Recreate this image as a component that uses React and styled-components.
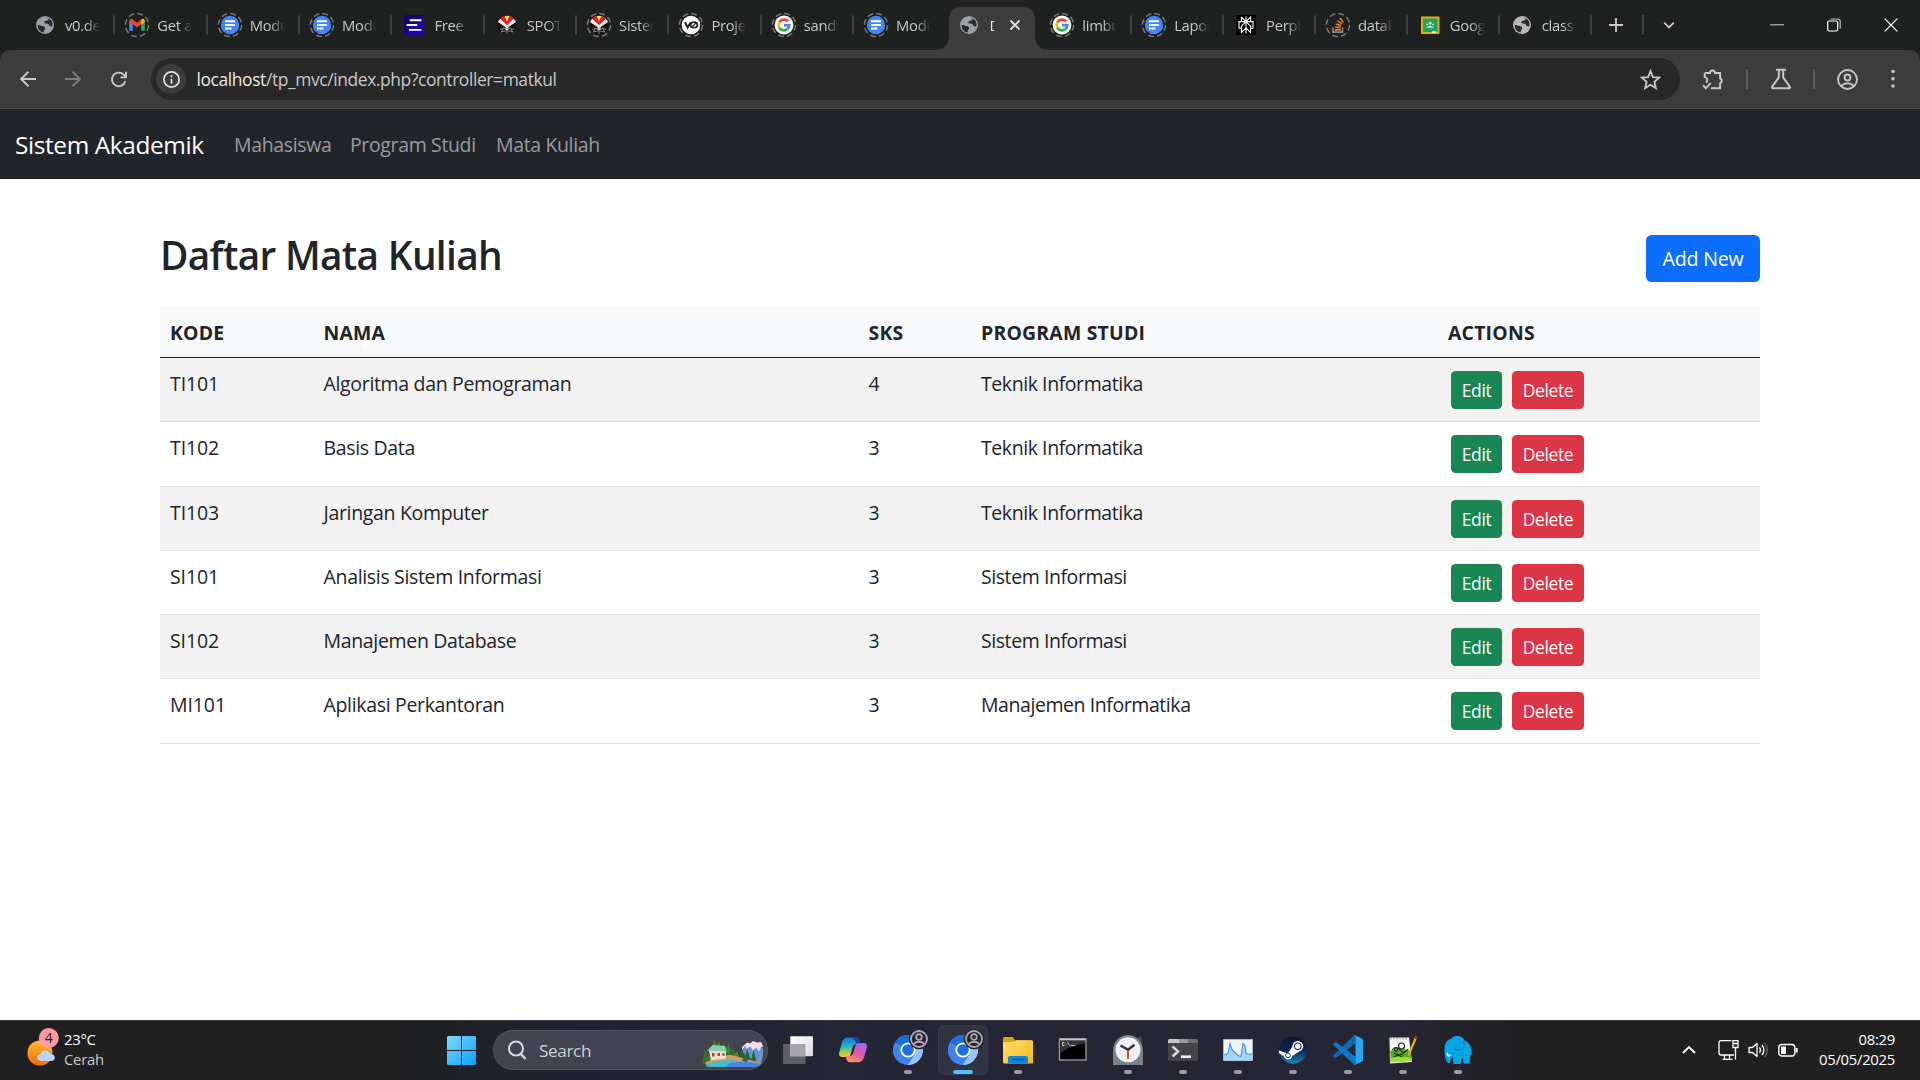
import React from "react";
import styled, { createGlobalStyle, css } from "styled-components";

const Global = createGlobalStyle`
  *, *::before, *::after { box-sizing: border-box; }
  html, body { margin: 0; height: 100%; }
  body {
    font-family: "Segoe UI", "Open Sans", "Noto Sans", sans-serif;
    background: #fff;
    color: #212529;
    overflow: hidden;
  }
`;

const Screen = styled.div`
  display: flex;
  flex-direction: column;
  width: 1920px;
  height: 1080px;
  overflow: hidden;
`;

/* ---------- browser chrome ---------- */

const TabStrip = styled.div`
  display: flex;
  align-items: center;
  height: 50px;
  flex: none;
  padding-left: 22px;
  background: #1f2020;
  color: #c7c7c7;
`;

const Tab = styled.div`
  display: flex;
  align-items: center;
  width: ${(p) => p.$w || 92.35}px;
  height: 50px;
  padding-left: 10px;
  flex: none;
  position: relative;
  ${(p) =>
    p.$divider &&
    css`
      &::after {
        content: "";
        position: absolute;
        right: -1px;
        top: 15px;
        width: 2px;
        height: 20px;
        border-radius: 1px;
        background: #3f4040;
      }
    `}
`;

const ActiveTab = styled(Tab)`
  align-self: flex-end;
  height: 43px;
  width: 85.35px;
  margin: 0 4.5px 0 4px;
  padding: 0 7px 7px 7px;
  background: #3c3c3c;
  border-radius: 12px 12px 0 0;
  &::before,
  &::after {
    content: "";
    position: absolute;
    bottom: 0;
    width: 12px;
    height: 12px;
  }
  &::before {
    right: 100%;
    background: radial-gradient(circle at 0 0, transparent 11.5px, #3c3c3c 12px);
  }
  &::after {
    left: 100%;
    background: radial-gradient(circle at 100% 0, transparent 11.5px, #3c3c3c 12px);
  }
`;

const Favicon = styled.svg`
  width: 26px;
  height: 26px;
  flex: none;
`;

const TabTitle = styled.span`
  margin-left: 7px;
  width: 35px;
  font-size: 14.8px;
  line-height: 20px;
  letter-spacing: -0.3px;
  white-space: nowrap;
  mask-image: linear-gradient(90deg, #000 60%, transparent 100%);
`;

const ActiveTitle = styled(TabTitle)`
  width: 6px;
  color: #e3e3e3;
  mask-image: linear-gradient(90deg, #000 70%, transparent 100%);
`;

const CloseTab = styled.svg`
  width: 12px;
  height: 12px;
  margin-left: auto;
  margin-right: 7px;
`;

const StripTools = styled.div`
  display: flex;
  align-items: center;
  height: 50px;
  flex: 1;
`;

const StripCell = styled.div`
  display: flex;
  align-items: center;
  justify-content: center;
  width: ${(p) => p.$w}px;
  height: 20px;
  border-right: ${(p) => (p.$line ? "2px solid #3f4040" : "none")};
`;

const WindowControls = styled.div`
  display: flex;
  margin-left: auto;
`;

const ToolbarBack = styled.div`
  background: #1f2020;
  flex: none;
`;

const Toolbar = styled.div`
  display: flex;
  align-items: center;
  height: 59px;
  background: #3c3c3c;
  border-radius: 10px 10px 0 0;
  border-bottom: 1px solid #494949;
`;

const ToolButton = styled.div`
  display: flex;
  align-items: center;
  justify-content: center;
  width: ${(p) => p.$w || 45}px;
  height: 40px;
  flex: none;
`;

const ToolNav = styled.div`
  display: flex;
  width: 151px;
  padding-left: 5.5px;
  flex: none;
`;

const Omnibox = styled.div`
  display: flex;
  align-items: center;
  width: 1529px;
  height: 42px;
  flex: none;
  padding: 0 19px 0 5px;
  border-radius: 21px;
  background: #282828;
`;

const InfoChip = styled.div`
  display: flex;
  align-items: center;
  justify-content: center;
  width: 30px;
  height: 30px;
  border-radius: 50%;
  background: #3c3c3c;
`;

const Address = styled.span`
  margin-left: 10.5px;
  flex: 1;
  font-size: 17.4px;
  letter-spacing: -0.38px;
  color: #c7c7c7;
  white-space: nowrap;
  b {
    font-weight: 400;
    color: #e8e8e8;
  }
`;

const ToolDivider = styled.div`
  width: 2px;
  height: 20px;
  background: #5c5c5c;
`;

/* ---------- page ---------- */

const Page = styled.div`
  flex: 1;
  display: flex;
  flex-direction: column;
  background: #fff;
  min-height: 0;
`;

const Navbar = styled.nav`
  display: flex;
  align-items: center;
  height: 70px;
  padding-left: 15px;
  background: #212529;
`;

const Brand = styled.a`
  width: 190px;
  margin-right: 19px;
  font-size: 24.4px;
  letter-spacing: -0.38px;
  line-height: 37px;
  white-space: nowrap;
  color: #fff;
`;

const NavLink = styled.a`
  padding: 2px 0 0 10px;
  margin-right: 10px;
  width: ${(p) => p.$w}px;
  font-size: 19.5px;
  letter-spacing: -0.36px;
  line-height: 30px;
  white-space: nowrap;
  color: rgba(255, 255, 255, 0.55);
`;

const Container = styled.main`
  width: 1600px;
  margin: 0 auto;
  padding-top: 50px;
`;

const Heading = styled.header`
  display: flex;
  justify-content: space-between;
  align-items: flex-start;
  height: 78px;
`;

const Title = styled.h1`
  margin: 2px 0 0;
  font-size: 38.8px;
  font-weight: 600;
  line-height: 48px;
  letter-spacing: -0.67px;
`;

const Button = styled.button`
  border: 0;
  padding: 0;
  font-family: inherit;
  color: #fff;
  text-align: center;
  white-space: nowrap;
  width: ${(p) => p.$w}px;
  height: 38px;
  border-radius: 4.5px;
  font-size: 17.5px;
  letter-spacing: -0.4px;
  line-height: 39px;
  background: ${(p) => p.$bg};
`;

const AddButton = styled(Button)`
  margin-top: 6px;
  height: 47px;
  line-height: 47px;
  border-radius: 5.5px;
  font-size: 19.6px;
  letter-spacing: -0.2px;
`;

const Table = styled.div`
  display: flex;
  flex-direction: column;
`;

const Row = styled.div`
  display: grid;
  grid-template-columns: 153.5px 545px 112.5px 467px 1fr;
  height: ${(p) => p.$h}px;
  padding-top: 11px;
  border-bottom: 1px solid #dee2e6;
  background: ${(p) => (p.$striped ? "#f2f2f2" : "#fff")};
`;

const HeadRow = styled(Row)`
  background: #f8f9fa;
  border-bottom-color: #212529;
  font-weight: 700;
`;

const Cell = styled.div`
  padding-left: 10px;
  font-size: 19.5px;
  line-height: 30px;
  letter-spacing: ${(p) => p.$track || -0.1}px;
  white-space: nowrap;
`;

const HeadCell = styled(Cell)`
  font-size: 19.4px;
  letter-spacing: 0.22px;
`;

const Actions = styled.div`
  display: flex;
  gap: 10px;
  padding: 2px 0 0 13px;
`;

/* ---------- taskbar ---------- */

const Taskbar = styled.footer`
  display: flex;
  align-items: stretch;
  height: 60px;
  flex: none;
  padding-bottom: 1px;
  border-top: 1px solid #3b3f42;
  background: linear-gradient(
    90deg,
    #202020 0,
    #202020 380px,
    #20232f 560px,
    #222632 760px,
    #262534 1000px,
    #262533 1400px,
    #202020 1540px
  );
  color: #fff;
`;

const Weather = styled.div`
  display: flex;
  align-items: center;
  width: 434px;
  padding-left: 26px;
  gap: 4px;
`;

const TwoLines = styled.div`
  display: flex;
  flex-direction: column;
  margin-top: -3px;
  font-size: 14.9px;
  line-height: 20px;
  letter-spacing: -0.3px;
  text-align: ${(p) => p.$align || "left"};
  span:last-child {
    color: ${(p) => p.$second || "#fff"};
  }
`;

const StartCell = styled.div`
  display: flex;
  align-items: center;
  justify-content: center;
  width: 55px;
`;

const SearchBox = styled.div`
  display: flex;
  align-items: center;
  align-self: center;
  width: 275px;
  height: 40px;
  margin: 0 2.5px 0 4px;
  padding: 0 2px 0 13px;
  border: 1px solid #535563;
  border-radius: 20px;
  background: #414350;
  overflow: hidden;
  span {
    margin-left: 12px;
    flex: 1;
    font-size: 17.2px;
    letter-spacing: -0.4px;
    color: #cfd0d4;
  }
`;

const AppSlot = styled.div`
  position: relative;
  display: flex;
  align-items: center;
  justify-content: center;
  width: 55px;
`;

const ActivePad = styled.div`
  display: flex;
  align-items: center;
  justify-content: center;
  width: 50px;
  height: 50px;
  border-radius: 6px;
  background: ${(p) => (p.$on ? "#323341" : "transparent")};
  border: 1px solid ${(p) => (p.$on ? "#3a3b49" : "transparent")};
`;

const Running = styled.i`
  position: absolute;
  bottom: 5px;
  left: 50%;
  width: ${(p) => (p.$on ? 20 : 8)}px;
  height: 4px;
  border-radius: 2px;
  transform: translateX(-50%);
  background: ${(p) => (p.$on ? "#4cc2ff" : "#9a9aa0")};
`;

const Tray = styled.div`
  display: flex;
  align-items: center;
  margin-left: auto;
  padding-right: 25px;
`;

const TrayIcon = styled.svg`
  width: ${(p) => p.$w}px;
  height: 24px;
  margin-right: ${(p) => p.$gap}px;
  flex: none;
`;

/* ---------- favicons ---------- */

const DashRing = () => (
  <circle cx="13" cy="13" r="11.6" fill="none" stroke="#777" strokeWidth="1.5" strokeDasharray="6 3.1" />
);

const Globe = ({ tone = "#9aa0a6" }) => (
  <g>
    <circle cx="13" cy="13" r="9" fill={tone} />
    <path d="M5.5 13 Q8 12.600 9.500 14 Q12 13.600 13 15.400 Q13.600 17.500 12 18 L11.500 20.600 Q6 19.600 5.500 13 Z" fill="#27292a" />
    <path d="M14 6 Q16 6 17 7 L15.500 8.500 Q12.500 8.600 12.200 10.200 Q12.600 12 15 11.500 Q17.500 11.500 17.600 14 L20.300 14.600 Q21.500 8 15.500 5.800 Z" fill="#27292a" />
  </g>
);

const Docs = () => (
  <g>
    <circle cx="13" cy="13" r="9.200" fill="#4285f4" />
    <path d="M8 9.200h10M8 12.900h10M8 16.600h6.500" stroke="#fff" strokeWidth="2" />
  </g>
);

const GoogleG = () => (
  <g>
    <circle cx="13" cy="13" r="9.400" fill="#fff" />
    <g fill="none" strokeWidth="2.700">
      <path d="M8.400 10.300 A5.300 5.300 0 0 1 17 9.500" stroke="#ea4335" />
      <path d="M8.400 10.300 A5.300 5.300 0 0 0 8.400 15.700" stroke="#fbbc05" />
      <path d="M8.400 15.700 A5.300 5.300 0 0 0 16.500 17" stroke="#34a853" />
      <path d="M16.500 17 A5.300 5.300 0 0 0 18.300 13.200 L13 13.200" stroke="#4285f4" />
    </g>
  </g>
);

const Emblem = () => (
  <g>
    <circle cx="13" cy="13" r="9.500" fill="#141414" />
    <path d="M4.300 9.500 Q7 3.500 13 3.500 Q19 3.500 21.700 9.500 L14.600 14.500 L13 17 L11.400 14.500 Z" fill="#e32222" />
    <path d="M4 10 Q5 7.500 6.500 7 L13 13 L19.500 7 Q21 7.500 22 10 L14.500 15 V18h-3V15z" fill="#f4f4f4" />
    <path d="M6.600 6.700 L13 12.600 L19.400 6.700 Q16.500 3.700 13 3.700 Q9.500 3.700 6.600 6.700z" fill="#e32222" />
    <path d="M10.600 3.900h4.800L13 9.500z" fill="#ffe06a" />
    <path d="M6 17.300q7-2 14 0M7 20q6-2.500 12 0M9.500 15.500L7.500 20M16.500 15.500l2 4.500M13 16v6" stroke="#9a9a9a" strokeWidth=".8" fill="none" />
  </g>
);

const favicons = {
  globe: <Globe />,
  globeLight: <Globe tone="#b6b6b6" />,
  gmail: (
    <g>
      <path d="M5.200 8.500v10.300h3.600v-7z" fill="#4285f4" />
      <path d="M20.800 8.500v10.300h-3.600v-7z" fill="#34a853" />
      <path d="M5.200 10V8.200q1.600-2.200 3.600-.8L13 10.800l4.200-3.400v4.900L13 15.600 5.200 10z" fill="#ea4335" />
      <path d="M17.200 7.400q2-1.400 3.600.8V10l-3.600 2.800z" fill="#fbbc04" />
    </g>
  ),
  docs: <Docs />,
  free: (
    <g>
      <rect x="3" y="3" width="20" height="20" rx="1.500" fill="#1f05a8" />
      <path d="M3 4.500Q3 3 4.500 3H23L3 23z" fill="#0d0550" opacity=".6" />
      <path d="M9.500 8.200h10.200M6.300 13h9.200M8.800 17.900h11" stroke="#fff" strokeWidth="1.900" strokeLinecap="round" />
    </g>
  ),
  emblem: <Emblem />,
  vo: (
    <g>
      <circle cx="13" cy="13" r="9.300" fill="#fff" />
      <path d="M7 10.200l2.600 5.200 3.200-5" stroke="#222" strokeWidth="2" fill="none" />
      <ellipse cx="16" cy="12.900" rx="3.400" ry="2.700" stroke="#222" strokeWidth="1.700" fill="none" />
      <path d="M14 14.800l4-3.800" stroke="#222" strokeWidth="1.100" />
    </g>
  ),
  google: <GoogleG />,
  perplexity: (
    <g>
      <rect x="3" y="3" width="20" height="20" fill="#000" />
      <g stroke="#fff" strokeWidth="1.100" fill="none">
        <path d="M13 4.500v17M8.400 5v4.600h9.200V5L13 9.600 8.400 5M13 9.600l-4.600 4.600v6.200L13 16M13 9.600l4.600 4.600v6.200L13 16M8.400 9.600H6v6.600h2.400M17.600 9.600H20v6.600h-2.400" />
      </g>
    </g>
  ),
  stack: (
    <g fill="none">
      <path d="M8 15.500v4.600h9.500v-4.600" stroke="#8a8a8a" strokeWidth="1.600" />
      <path d="M10 17.900h5.800M10.100 15l5.700.6M10.700 12l5.400 1.600M12.300 8.900l4.800 3M14.900 6l3.400 4.500" stroke="#e8781e" strokeWidth="1.700" />
    </g>
  ),
  classroom: (
    <g>
      <rect x="4" y="4.500" width="18.500" height="17.500" rx="1" fill="#e8ab0c" />
      <rect x="6" y="6.500" width="14.500" height="13.500" fill="#1ea362" />
      <circle cx="13.200" cy="11.300" r="1.400" fill="#fff" />
      <circle cx="10.200" cy="12.400" r=".9" fill="#c4ead6" />
      <circle cx="16.200" cy="12.400" r=".9" fill="#c4ead6" />
      <path d="M9 15.400q4.200-3 8.400 0z" fill="#fff" />
      <path d="M15 19.300h4v1.600h-4z" fill="#eee" />
    </g>
  ),
};

const tabsBefore = [
  ["globe", "v0.de", false],
  ["gmail", "Get a", true],
  ["docs", "Modu", true],
  ["docs", "Modu", true],
  ["free", "Free", false],
  ["emblem", "SPOT", false],
  ["emblem", "Sister", true],
  ["vo", "Proje", true],
  ["google", "sandv", true],
  ["docs", "Modu", true],
];

const tabsAfter = [
  ["google", "limbu", true],
  ["docs", "Lapor", true],
  ["perplexity", "Perpl", false],
  ["stack", "datab", true],
  ["classroom", "Goog", false],
  ["globeLight", "class", false],
];

const BrowserTab = ({ icon, title, ring, divider, width }) => (
  <Tab $divider={divider} $w={width}>
    <Favicon viewBox="0 0 26 26">
      {ring && <DashRing />}
      {favicons[icon]}
    </Favicon>
    <TabTitle>{title}</TabTitle>
  </Tab>
);

/* ---------- toolbar icons ---------- */

const Line = ({ size = 20, color = "#c7c7c7", w = 2, children }) => (
  <svg width={size} height={size} viewBox="0 0 20 20" fill="none" stroke={color} strokeWidth={w}>
    {children}
  </svg>
);

/* ---------- taskbar icons ---------- */

const Chromium = () => (
  <g>
    <circle cx="15" cy="20" r="15" fill="#4b8bf5" />
    <path d="M15 20 L2 12.5 A15 15 0 0 1 28 12.5 L15 12.5 Z" fill="#1a6de0" />
    <path d="M28 12.6 A15 15 0 0 1 14.6 35 L21.7 23.7 L22 16 L19 12.6Z" fill="#9cc2fb" />
    <path d="M2 12.5 A15 15 0 0 0 14.6 35 L21.5 24 L8.6 24 Z" fill="#3f82ee" />
    <circle cx="15" cy="20" r="7.600" fill="#fff" />
    <circle cx="15" cy="20" r="5.800" fill="#1d6fe6" />
  </g>
);

const ProfileBadge = ({ tone }) => (
  <g>
    <circle cx="26" cy="9" r="10.300" fill="#25232f" />
    <g fill="none" stroke={tone} strokeWidth="1.800">
      <circle cx="26" cy="9" r="8" />
      <circle cx="26" cy="7" r="2.800" />
      <path d="M20.500 14 Q26 9.600 31.500 14" />
    </g>
  </g>
);

const TaskIcon = styled.svg`
  width: 40px;
  height: 40px;
  flex: none;
  overflow: visible;
`;

const ChromiumApp = ({ tone }) => (
  <TaskIcon viewBox="-5 0 40 40">
    <Chromium />
    <ProfileBadge tone={tone} />
  </TaskIcon>
);

const apps = [
  {
    id: "taskview",
    icon: (
      <TaskIcon viewBox="0 0 40 40">
        <defs>
          <linearGradient id="tv" x1="0" y1="0" x2="1" y2="1">
            <stop offset="0" stopColor="#fff" />
            <stop offset="1" stopColor="#dcdcdc" />
          </linearGradient>
        </defs>
        <rect x="5" y="14" width="22.500" height="20" rx="1" fill="#5e5f61" />
        <rect x="12.300" y="6.200" width="22.700" height="20" rx="1" fill="url(#tv)" />
        <path d="M12.300 14h15.200v12.200H12.300z" fill="#a6a6a8" />
      </TaskIcon>
    ),
  },
  {
    id: "copilot",
    icon: (
      <TaskIcon viewBox="0 0 40 40">
        <defs>
          <linearGradient id="cp1" x1="0" y1="0" x2="0" y2="1">
            <stop offset="0" stopColor="#1a6fe0" />
            <stop offset=".45" stopColor="#22b3c4" />
            <stop offset=".75" stopColor="#9fd04a" />
            <stop offset="1" stopColor="#f4c62c" />
          </linearGradient>
          <linearGradient id="cp2" x1=".8" y1="0" x2=".2" y2="1">
            <stop offset="0" stopColor="#a566f2" />
            <stop offset=".5" stopColor="#e255a6" />
            <stop offset="1" stopColor="#ff9a5a" />
          </linearGradient>
        </defs>
        <path d="M23 7.500 Q25.500 7.500 26.300 10 L27.500 14 H23 Q20.700 14 20 16.500 L17.700 24 Q16.800 27 14 27 H9.500 Q5 27 6.300 22 L9 12.500 Q10.500 7.500 15 7.500Z" fill="url(#cp1)" />
        <path d="M17 32.300 Q14.500 32.300 13.700 30 L12.600 26 H16.500 Q19.300 26 20 23.500 L22.300 16.200 Q23.200 13 26 13 H30.500 Q35 13 33.700 18 L31 27.500 Q29.500 32.300 25 32.300Z" fill="url(#cp2)" />
        <path d="M19 7.500h4Q25.500 7.500 26.300 10L27.500 13.500h-4.300Q21.500 9 19 7.500z" fill="#1b3fa8" />
      </TaskIcon>
    ),
  },
  { id: "chromium1", running: true, icon: <ChromiumApp tone="#b3a5bd" /> },
  { id: "chromium2", running: true, active: true, icon: <ChromiumApp tone="#a7a9a8" /> },
  {
    id: "explorer",
    running: true,
    icon: (
      <TaskIcon viewBox="0 0 40 40">
        <defs>
          <linearGradient id="fo" x1="0" y1="0" x2="1" y2="1">
            <stop offset="0" stopColor="#ffdf70" />
            <stop offset="1" stopColor="#fbb818" />
          </linearGradient>
        </defs>
        <path d="M5 8.500Q5 7 6.500 7h8l3 3.500H33V18H5z" fill="#e0a010" />
        <path d="M5 12h10.500l3-1.700H33.500Q35 10.300 35 12v21.500H6.500Q5 33.500 5 32z" fill="url(#fo)" />
        <path d="M10 33.500V28q0-2 2-2h16q2 0 2 2v5.500z" fill="#1583d6" />
        <path d="M13.500 29.500h13" stroke="#0b5ca5" strokeWidth="1.400" />
      </TaskIcon>
    ),
  },
  {
    id: "cmd",
    icon: (
      <TaskIcon viewBox="0 0 40 40">
        <rect x="6.500" y="9" width="26.500" height="21" fill="#000" stroke="#9c9c9c" strokeWidth="1.300" />
        <path d="M7 8.500h25.500v2H7z" fill="#c9c9c9" />
        <path d="M7.500 11h24.500v3q-14 .5-24.500 9z" fill="#333" />
        <path d="M11.500 12.500h-2v3h2M13 13v.6M13 14.800v.6M14.500 12.200l2 3.400M17.500 15.600h5" stroke="#ddd" strokeWidth=".9" fill="none" />
      </TaskIcon>
    ),
  },
  {
    id: "clock",
    running: true,
    icon: (
      <TaskIcon viewBox="0 0 40 40">
        <path d="M29 9l3-3 3 4-2 4z" fill="#4a4a48" />
        <path d="M5 20A15 15 0 0 1 35 20V35H5z" fill="#76838c" />
        <circle cx="20" cy="19.800" r="12.500" fill="#f0f1f2" />
        <path d="M12.500 15.500l7.500 4.300 6.500-5" stroke="#2f3437" strokeWidth="2.400" fill="none" strokeLinejoin="round" />
        <path d="M20 20.500V29" stroke="#e2461f" strokeWidth="2" />
      </TaskIcon>
    ),
  },
  {
    id: "terminal",
    running: true,
    icon: (
      <TaskIcon viewBox="0 0 40 40">
        <rect x="5" y="9" width="30" height="22" rx="1.500" fill="#454545" />
        <path d="M5 13V10.500Q5 9 6.500 9H16v4z" fill="#c6c6c8" />
        <path d="M16 9h9.500v4H16z" fill="#98989c" />
        <path d="M25.500 9h8Q35 9 35 10.500V13h-9.500z" fill="#6e6e73" />
        <path d="M9.500 16.500l5.500 5-5.500 5" stroke="#d4d4d4" strokeWidth="2.600" fill="none" />
        <path d="M18 26.700h10" stroke="#f0f0f0" strokeWidth="2.600" />
      </TaskIcon>
    ),
  },
  {
    id: "monitor",
    running: true,
    icon: (
      <TaskIcon viewBox="0 0 40 40">
        <rect x="5.500" y="9.500" width="29" height="21" fill="#eef1f4" stroke="#a9b7c6" />
        <path d="M6 25l4-1.500 2-10 2 6 3 3 3 3 3 1 2-13 2 2 1 8 4 1 2-1v7H6z" fill="#a4d4f8" />
        <path d="M6 25l4-1.500 2-10 2 6 3 3 3 3 3 1 2-13 2 2 1 8 4 1 2-1" fill="none" stroke="#3a9ae0" strokeWidth="1.100" />
      </TaskIcon>
    ),
  },
  {
    id: "steam",
    running: true,
    icon: (
      <TaskIcon viewBox="0 0 40 40">
        <defs>
          <linearGradient id="st" x1="0" y1="0" x2="0" y2="1">
            <stop offset="0" stopColor="#0f1433" />
            <stop offset=".5" stopColor="#0b2558" />
            <stop offset="1" stopColor="#1387b8" />
          </linearGradient>
        </defs>
        <circle cx="20" cy="20" r="13.800" fill="url(#st)" />
        <path d="M5.700 20.500l9 3 5-7 8 4-8.500 5.500q-1 4-5 3.500-2.500-.5-3.300-3.300L6.300 23.500z" fill="#fff" />
        <circle cx="24.800" cy="16.300" r="5.400" fill="#fff" />
        <circle cx="24.800" cy="16.300" r="3.800" fill="#16264f" />
        <circle cx="24.800" cy="16.300" r="2.700" fill="#fff" />
        <circle cx="15" cy="25.300" r="2.400" fill="none" stroke="#15467a" strokeWidth="1" />
      </TaskIcon>
    ),
  },
  {
    id: "vscode",
    running: true,
    icon: (
      <TaskIcon viewBox="0 0 40 40">
        <path d="M5.300 25.200L26.500 5l1.500 8-19.800 14.700Q7.500 28.200 6.800 27.600L5.300 26.300Q4.800 25.800 5.300 25.200z" fill="#0f6ab4" />
        <path d="M5.300 14.800L26.500 35l1.500-8L8.200 12.300Q7.500 11.800 6.800 12.400L5.300 13.700Q4.800 14.200 5.300 14.800z" fill="#1479c4" />
        <path d="M27 5.200L34 8.500Q35 9 35 10V30Q35 31 34 31.500L27 34.800Q26 35.200 25.500 34.500 27.500 35 27.500 33V7Q27.500 5 25.500 5.500 26 4.800 27 5.200z" fill="#2aa5f4" />
      </TaskIcon>
    ),
  },
  {
    id: "notepadpp",
    running: true,
    icon: (
      <TaskIcon viewBox="0 0 40 40">
        <path d="M6.500 7.500h19.500l3 24.500L7 33.500z" fill="#f4f4f0" />
        <path d="M7.300 21q10-5 20.300 0l1.200 9.800L7.800 32.300z" fill="#4fae1e" />
        <path d="M7.700 28q10-3 20.800 0l.3 3-21 1.300z" fill="#a5db35" />
        <g stroke="#232b1c" fill="none" strokeWidth="1.200">
          <path d="M9 20q4-5 8 0t8-1M11 23q6 4 11-1M11 27q4-3 8 0" />
          <circle cx="18.500" cy="16" r="3" />
          <circle cx="13" cy="19.500" r="1.600" />
        </g>
        <path d="M8 7v2.500M11 7v2.500M14 7v2.500M17 7v2.500M20 7v2.500M23 7v2.500" stroke="#888" />
        <path d="M31.500 8l2 1.200L27 24.500l-2 1.500.2-2.600z" fill="#f0ac1a" />
        <path d="M31.500 8l1-2.200 1.700 1L33.500 9.200z" fill="#b33" />
      </TaskIcon>
    ),
  },
  {
    id: "elephant",
    running: true,
    icon: (
      <TaskIcon viewBox="0 0 40 40">
        <path d="M6.500 18Q7 10.500 13 8.800Q16 5 21 6Q25.500 7 26.500 10.500Q33 13 33.500 21Q34 25 32 25.500L31.500 33.500H25.500L25 28.500H23.500L23 34H15.500L15 27Q12.500 28 12.500 31.500Q12 33.500 10 33Q6 29 6.500 18Z" fill="#06a6e6" />
        <path d="M25.500 11q2.500 8-4 9-4 .5-5-2.500" fill="none" stroke="#0681bb" strokeWidth="1.200" />
        <path d="M9 21.500q1 4 4 3.500-1 2-3 1.500-2-1-1-5z" fill="#fff" />
      </TaskIcon>
    ),
  },
];

const ArtSvg = styled.svg`
  width: 64px;
  height: 30px;
  margin-top: 5px;
  margin-right: -1px;
  flex: none;
`;

const SearchArt = () => (
  <ArtSvg viewBox="0 0 64 30">
    <path d="M38 26L41 11l5-6h12l3 6q1 8-3 16z" fill="#6b93d6" />
    <path d="M40 9l5-4.500 3 1L51 3l4 1.500 4-.5 2.500 5-2-.5-2.500 5-3-4-3 3-3-4-3.500 2.500L43 8l-3 4z" fill="#efdfe9" />
    <path d="M7 22L8.500 9l2 1 1.500-9 2.500 7L17 3l2 6 3-4 2 6 2.500-6 2 8 2.500-3 2 6 2-3 2 5v4L20 20z" fill="#4a7f26" />
    <path d="M20 18l3-12 3 12zM27 18l2.500-11L32 18z" fill="#2f6b26" />
    <path d="M0 25L3.500 12l2 7 1.500-4 2 8-3 4z" fill="#3b7426" />
    <path d="M38 20l2.500-8 2.500 7 2-8 3 9 1 2 2.500-10 3 12z" fill="#246134" />
    <path d="M3 25Q22 14 34 18T60 25l-4 2H6z" fill="#d39b65" />
    <path d="M7 12.500h17v8L9 22.500z" fill="#f0e0c8" />
    <path d="M5 13l5.500-6L23 8l2 5.500-12-.5z" fill="#86cfaf" />
    <path d="M10 15h2.500v3.500H10zM15.500 15H18v3h-2.500zM20.500 15h2v3h-2z" fill="#8d5230" />
    <path d="M40 23l3-8 3 9z" fill="#2b6a34" />
    <path d="M3 27Q20 20.500 34 22.500T59 26Q57 29 50 29H8Q5 29 3 27z" fill="#43bccb" />
    <path d="M28 25q16-3 31 1-2 3-9 3H24z" fill="#4684e8" />
  </ArtSvg>
);

/* ---------- data ---------- */

const courses = [
  ["TI101", "Algoritma dan Pemograman", 4, "Teknik Informatika", 64],
  ["TI102", "Basis Data", 3, "Teknik Informatika", 65],
  ["TI103", "Jaringan Komputer", 3, "Teknik Informatika", 64],
  ["SI101", "Analisis Sistem Informasi", 3, "Sistem Informasi", 64],
  ["SI102", "Manajemen Database", 3, "Sistem Informasi", 64],
  ["MI101", "Aplikasi Perkantoran", 3, "Manajemen Informatika", 65],
];

export default function App() {
  return (
    <Screen>
      <Global />
      <TabStrip>
        {tabsBefore.map(([icon, title, ring], i) => (
          <BrowserTab key={i} icon={icon} title={title} ring={ring} divider={i < 9} />
        ))}
        <ActiveTab>
          <Favicon viewBox="0 0 26 26">
            <Globe />
          </Favicon>
          <ActiveTitle>D</ActiveTitle>
          <CloseTab viewBox="0 0 12 12">
            <path d="M1.500 1.500l9 9M10.500 1.500l-9 9" stroke="#e3e3e3" strokeWidth="1.900" />
          </CloseTab>
        </ActiveTab>
        {tabsAfter.map(([icon, title, ring], i) => (
          <BrowserTab key={i} icon={icon} title={title} ring={ring} width={91.9} divider />
        ))}
        <StripTools>
          <StripCell $w={53} $line>
            <Line size={14} w={2.600}>
              <path d="M10 0v20M0 10h20" />
            </Line>
          </StripCell>
          <StripCell $w={50}>
            <Line size={12} w={3}>
              <path d="M2 6l8 8 8-8" />
            </Line>
          </StripCell>
          <WindowControls>
            <StripCell $w={56}>
              <svg width="14" height="2">
                <path d="M0 0h14v1.500H0z" fill="#9a9a9a" />
              </svg>
            </StripCell>
            <StripCell $w={57}>
              <svg width="14" height="14" viewBox="0 0 14 14" fill="none" stroke="#fff" strokeWidth="1.200">
                <rect x=".7" y="3" width="10" height="10" rx="1.500" />
                <path d="M3.500 1h7.500q2.200 0 2.200 2.200V10.500" stroke="#bbb" />
              </svg>
            </StripCell>
            <StripCell $w={58}>
              <svg width="14" height="14" viewBox="0 0 14 14">
                <path d="M.7.7l12.600 12.600M13.300.7L.7 13.300" stroke="#fff" strokeWidth="1.200" />
              </svg>
            </StripCell>
          </WindowControls>
        </StripTools>
      </TabStrip>

      <ToolbarBack>
        <Toolbar>
          <ToolNav>
            <ToolButton $w={44}>
              <Line size={16} w={2.400}>
                <path d="M20 10H2M10.500 1L1.500 10l9 9" />
              </Line>
            </ToolButton>
            <ToolButton $w={46}>
              <Line size={16} w={2.400} color="#7d7d7d">
                <path d="M0 10h18M9.500 1l9 9-9 9" />
              </Line>
            </ToolButton>
            <ToolButton $w={45}>
              <Line size={17} w={2.300}>
                <path d="M18 12a8 8 0 1 1-2-7.700L18.500 7M18.800 1v6.500h-6.500" />
              </Line>
            </ToolButton>
          </ToolNav>
          <Omnibox>
            <InfoChip>
              <Line size={17} color="#e3e3e3">
                <circle cx="10" cy="10" r="9" />
                <path d="M10 9v6M10 5v2.300" />
              </Line>
            </InfoChip>
            <Address>
              <b>localhost</b>/tp_mvc/index.php?controller=matkul
            </Address>
            <Line size={21} w={1.800}>
              <path d="M10 2l2.300 5.700 6 .5-4.600 4 1.400 6L10 15l-5.100 3.200 1.400-6-4.600-4 6-.5z" />
            </Line>
          </Omnibox>
          <ToolButton $w={66}>
            <Line size={22} w={1.800}>
              <path d="M2.500 4.500h4.700a2.300 2.300 0 0 1 4.600 0h4.700v5a2.300 2.300 0 0 1 0 4.300v4.700H8M2.500 4.500v3.800a2.700 2.700 0 0 1 1 5M1 15.500l2.500 3L8 13.500" />
            </Line>
          </ToolButton>
          <ToolDivider />
          <ToolButton $w={65}>
            <Line size={22} w={1.800}>
              <path d="M5.500 1.500h9M8 2v6.500L2 17q-.5 1.500 1 1.500h14q1.500 0 1-1.500l-6-8.500V2" />
            </Line>
          </ToolButton>
          <ToolDivider />
          <ToolButton $w={65}>
            <Line size={21} w={1.800}>
              <circle cx="10" cy="10" r="9" />
              <circle cx="10" cy="8" r="2.800" />
              <path d="M4 16q6-5 12 0" />
            </Line>
          </ToolButton>
          <ToolButton $w={25}>
            <svg width="4" height="20" viewBox="0 0 4 20" fill="#c7c7c7">
              <circle cx="2" cy="2.500" r="1.800" />
              <circle cx="2" cy="9.800" r="1.800" />
              <circle cx="2" cy="17" r="1.800" />
            </svg>
          </ToolButton>
        </Toolbar>
      </ToolbarBack>

      <Page>
        <Navbar>
          <Brand>Sistem Akademik</Brand>
          <NavLink $w={106}>Mahasiswa</NavLink>
          <NavLink $w={136}>Program Studi</NavLink>
          <NavLink $w={120}>Mata Kuliah</NavLink>
        </Navbar>
        <Container>
          <Heading>
            <Title>Daftar Mata Kuliah</Title>
            <AddButton $w={114} $bg="#0d6efd">
              Add New
            </AddButton>
          </Heading>
          <Table>
            <HeadRow $h={51}>
              <HeadCell>KODE</HeadCell>
              <HeadCell>NAMA</HeadCell>
              <HeadCell>SKS</HeadCell>
              <HeadCell>PROGRAM STUDI</HeadCell>
              <HeadCell>ACTIONS</HeadCell>
            </HeadRow>
            {courses.map(([kode, nama, sks, prodi, h], i) => (
              <Row key={kode} $h={h} $striped={i % 2 === 0}>
                <Cell>{kode}</Cell>
                <Cell $track={-0.33}>{nama}</Cell>
                <Cell>{sks}</Cell>
                <Cell $track={-0.43}>{prodi}</Cell>
                <Actions>
                  <Button $w={51} $bg="#198754">
                    Edit
                  </Button>
                  <Button $w={72} $bg="#dc3545">
                    Delete
                  </Button>
                </Actions>
              </Row>
            ))}
          </Table>
        </Container>
      </Page>

      <Taskbar>
        <Weather>
          <svg width="34" height="46" viewBox="0 0 34 46">
            <defs>
              <linearGradient id="sun" x1="0" y1="0" x2="0" y2="1">
                <stop offset="0" stopColor="#fbc02f" />
                <stop offset="1" stopColor="#f0690f" />
              </linearGradient>
            </defs>
            <circle cx="14" cy="26" r="12.600" fill="url(#sun)" />
            <path d="M15 34q-3.500-.5-3.500-3.700 0-2.800 3-3.300 1-4 5-3.500 3.500.2 4.300 3.500 5 .2 5 3.700 0 3-3.300 3.300z" fill="#bcd4f7" />
            <circle cx="22.800" cy="11" r="10" fill="#ff99a4" />
            <text x="22.800" y="16" textAnchor="middle" fontSize="14" fill="#1a1a1a" fontFamily="Open Sans">
              4
            </text>
          </svg>
          <TwoLines $second="#c8c8c8">
            <span>23°C</span>
            <span>Cerah</span>
          </TwoLines>
        </Weather>
        <StartCell>
          <svg width="29" height="29" viewBox="0 0 29 29">
            <defs>
              <linearGradient id="win" x1="0" y1="0" x2="1" y2="1">
                <stop offset="0" stopColor="#7fdcff" />
                <stop offset="1" stopColor="#0c9bfa" />
              </linearGradient>
            </defs>
            <path d="M1 0h13v14H0V1zM15 0h13l1 1v13H15zM0 15h14v14H1l-1-1zM15 15h14v13l-1 1H15z" fill="url(#win)" />
          </svg>
        </StartCell>
        <SearchBox>
          <svg width="20" height="20" viewBox="0 0 20 20" fill="none" stroke="#d8d9dc" strokeWidth="2">
            <circle cx="9" cy="8.500" r="7" />
            <path d="M13.500 13.500l5 5.500" strokeWidth="2.400" />
          </svg>
          <span>Search</span>
          <SearchArt />
        </SearchBox>
        {apps.map((app) => (
          <AppSlot key={app.id}>
            <ActivePad $on={app.active}>{app.icon}</ActivePad>
            {app.running && <Running $on={app.active} />}
          </AppSlot>
        ))}
        <Tray>
          <TrayIcon $w={14} $gap={22} viewBox="0 0 14 24" fill="none" stroke="#fff" strokeWidth="1.800">
            <path d="M1 15l6-6 6 6" />
          </TrayIcon>
          <TrayIcon $w={21} $gap={9} viewBox="0 0 21 24" fill="none" stroke="#fff" strokeWidth="1.300">
            <path d="M13.500 2.700H3Q1 2.700 1 4.700V15q0 2 2 2h13M6.500 17v4M11.500 17v4M4.500 21.300h10" />
            <path d="M15 2.700h5v6.800h-5zM15 5.500h5M17.500 9.500v12" />
          </TrayIcon>
          <TrayIcon $w={20} $gap={10} viewBox="0 0 20 24" fill="none" stroke="#fff" strokeWidth="1.300">
            <path d="M1 9.500h3.500L9 5.500v13l-4.500-4H1z" strokeLinejoin="round" />
            <path d="M11.500 9.300q2 2.700 0 5.400M14 7q3.800 5 0 10" />
            <path d="M16.500 4.700q5.500 7.300 0 14.600" stroke="#666" />
          </TrayIcon>
          <TrayIcon $w={20} $gap={21} viewBox="0 0 20 24" fill="none" stroke="#fff" strokeWidth="1.400">
            <rect x=".8" y="6.500" width="16" height="11.500" rx="3" />
            <path d="M3 8.500h5v7.500H3z" fill="#fff" stroke="none" />
            <path d="M18.700 10v4.500" strokeWidth="2" />
          </TrayIcon>
          <TwoLines $align="right">
            <span>08:29</span>
            <span>05/05/2025</span>
          </TwoLines>
        </Tray>
      </Taskbar>
    </Screen>
  );
}
